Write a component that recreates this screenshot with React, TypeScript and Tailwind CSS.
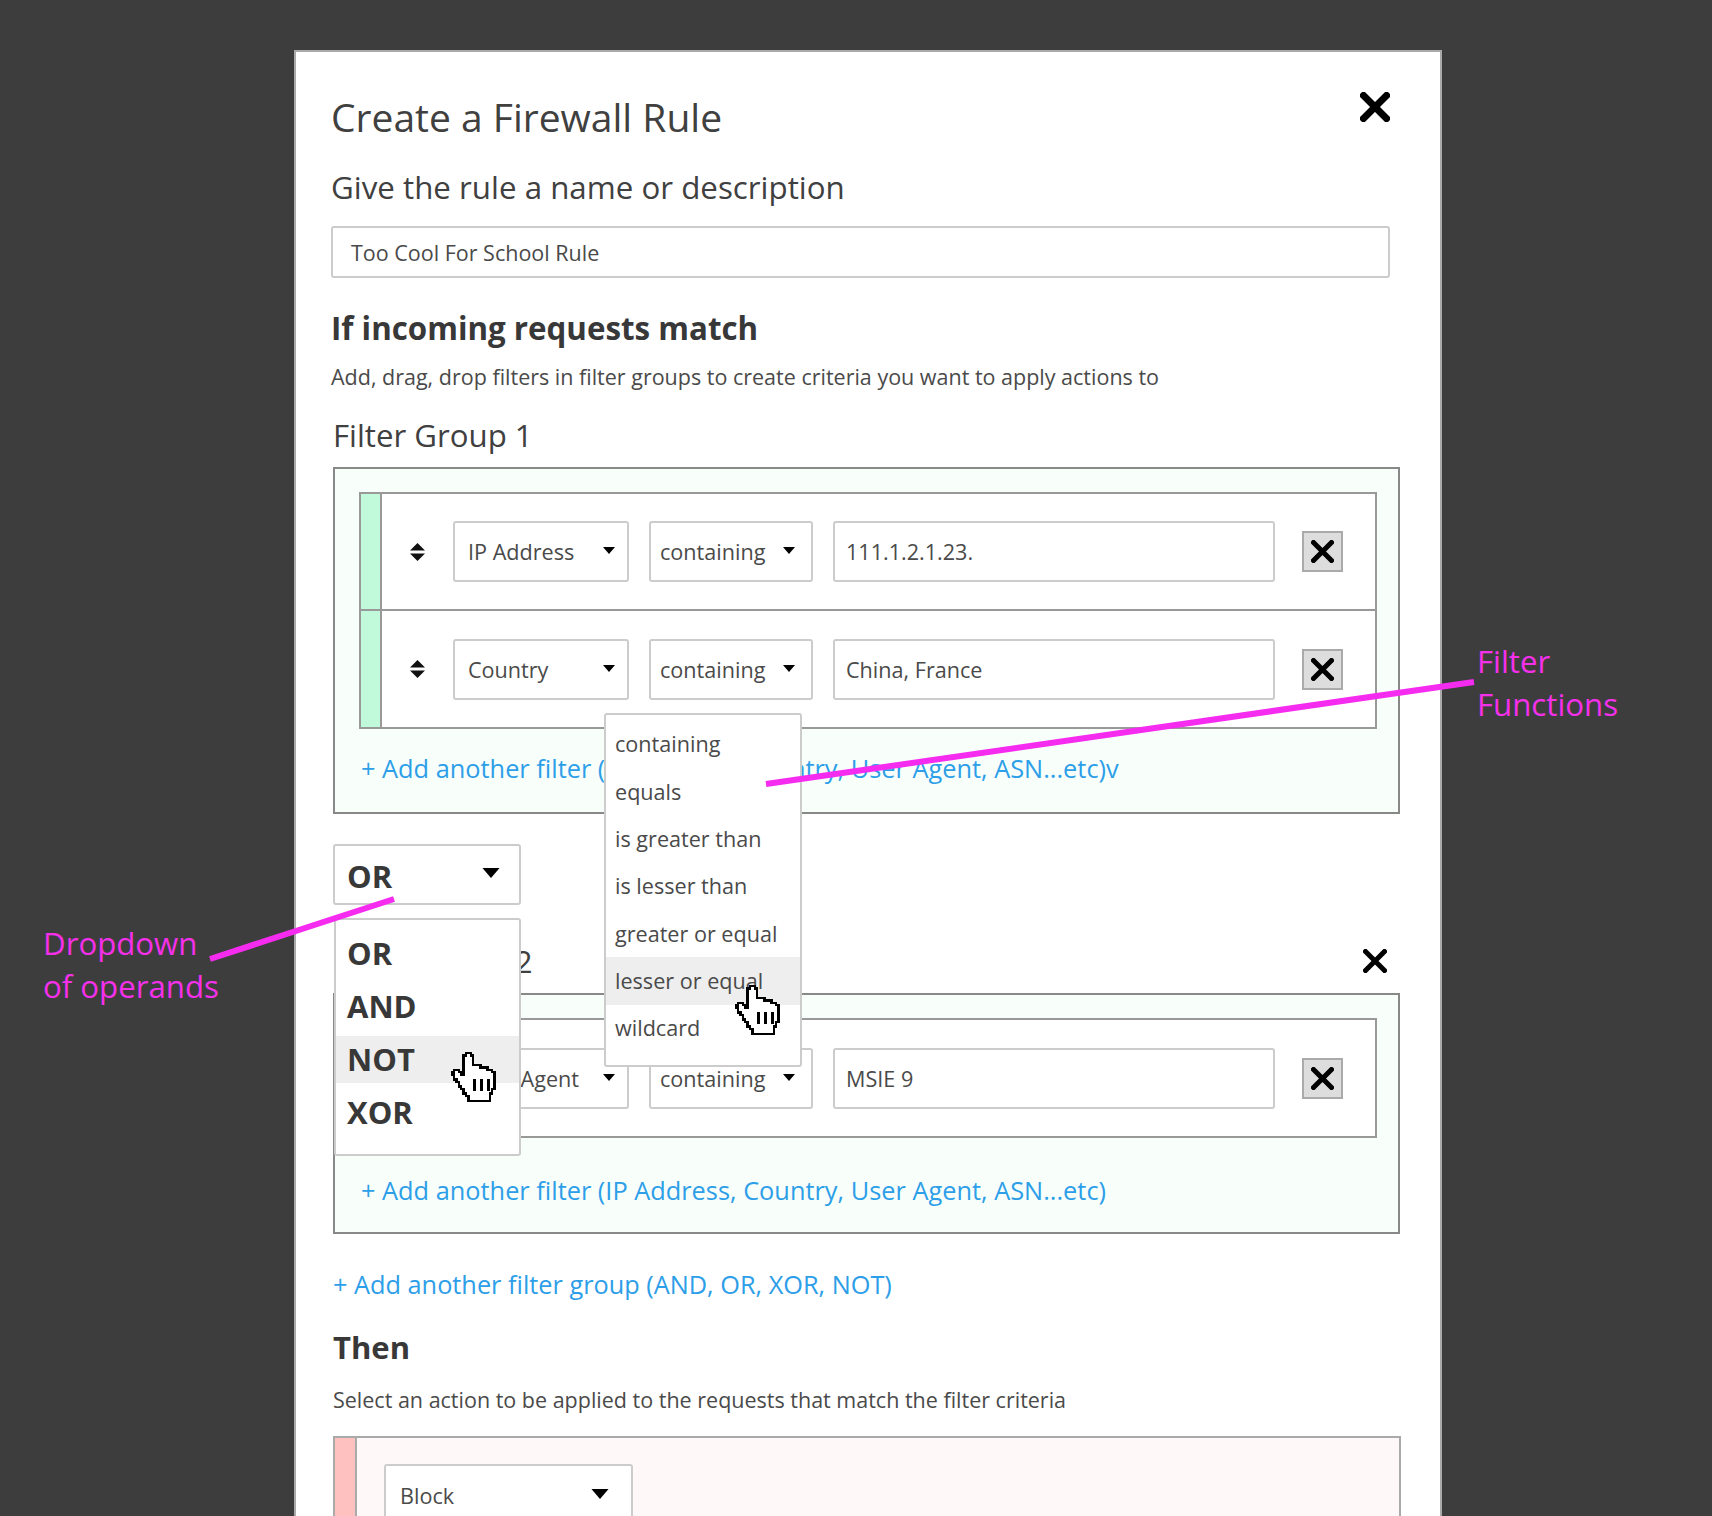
const font = "font-['Open_Sans',sans-serif]";

const Caret = ({ w = 12, h = 7 }: { w?: number; h?: number }) => (
  <svg width={w} height={h} viewBox="0 0 12 7" className="shrink-0">
    <path d="M0 0H12L6 7Z" fill="#000" />
  </svg>
);

const Cross = ({ size, stroke }: { size: number; stroke: number }) => (
  <svg width={size} height={size} viewBox={`0 0 ${size} ${size}`}>
    <path
      d={`M${stroke / 2} ${stroke / 2}L${size - stroke / 2} ${size - stroke / 2}M${size - stroke / 2} ${stroke / 2}L${stroke / 2} ${size - stroke / 2}`}
      stroke="#000"
      strokeWidth={stroke}
      strokeLinecap="square"
    />
  </svg>
);

const SortIcon = () => (
  <svg width="15" height="18" viewBox="0 0 15 18">
    <path d="M7.5 0L15 7.5H0ZM0 10.5H15L7.5 18Z" fill="#111" />
  </svg>
);

const Hand = ({ className }: { className: string }) => (
  <svg
    width="48"
    height="50"
    viewBox="-0.5 -0.5 20 21"
    shapeRendering="crispEdges"
    className={className}
  >
    <path
      d="M6 1h1v-1h2v1h1v4h3v1h3v1h2v1h1v7h-1v2h-1v3h-9v-2h-1v-1h-1v-2h-1v-1h-1v-2h-1v-1h-1v-2h-1v-1h1v-1h2v1h1v1h1z"
      fill="#fff"
      stroke="#000"
      strokeWidth="1"
    />
    <path d="M10 11h1v5h-1zM13 11h1v5h-1zM16 11h1v5h-1z" fill="#000" />
  </svg>
);

const Select = ({
  label,
  className,
  px,
}: {
  label: string;
  className: string;
  px: string;
}) => (
  <div
    className={`flex h-[61px] shrink-0 items-center justify-between rounded-[3px] border-2 border-[#ccc] bg-white text-[21.6px] text-[#4a4a4a] ${px} ${className}`}
  >
    <span className="whitespace-nowrap pt-[2px]">{label}</span>
    <span className="-mt-[2px]">
      <Caret />
    </span>
  </div>
);

const FilterRow = ({
  field,
  value,
  last,
}: {
  field: string;
  value: string;
  last?: boolean;
}) => (
  <div
    className={`flex items-center ${last ? "h-[116px]" : "h-[117px] border-b-2 border-[#999]"}`}
  >
    <div className="h-full w-[21px] shrink-0 border-r-2 border-[#999] bg-[#c0fadb]" />
    <div className="ml-[28px] flex w-[15px] shrink-0 justify-center">
      <SortIcon />
    </div>
    <Select label={field} className="ml-[28px] w-[176px]" px="pl-[13px] pr-[12px]" />
    <Select label="containing" className="ml-[20px] w-[164px]" px="pl-[9px] pr-[16px]" />
    <div className="ml-[20px] flex h-[61px] w-[442px] items-center rounded-[3px] border-2 border-[#ccc] bg-white pl-[11px] pt-[2px] text-[21.6px] text-[#4a4a4a]">
      {value}
    </div>
    <button className="ml-[27px] flex h-[41px] w-[41px] items-center justify-center border-2 border-[#aaa] bg-[#ddd]">
      <Cross size={23} stroke={5} />
    </button>
  </div>
);

const functionsList = [
  "containing",
  "equals",
  "is greater than",
  "is lesser than",
  "greater or equal",
  "lesser or equal",
  "wildcard",
];

const operands = ["OR", "AND", "NOT", "XOR"];

export default function App() {
  return (
    <div className={`relative h-[1516px] w-[1712px] overflow-hidden bg-[#3d3d3d] pt-[50px] ${font}`}>
      {/* modal */}
      <div className="relative ml-[294px] h-[1500px] w-[1148px] border-2 border-[#aaa] bg-white pl-[35px]">
        <div className="absolute right-[50px] top-[40px]">
          <Cross size={30} stroke={7} />
        </div>
        <h1 className="pt-[43px] text-[39px] leading-[44px] text-[#404040]">Create a Firewall Rule</h1>
        <h2 className="mt-[28px] text-[31.3px] leading-[40px] text-[#404040]">
          Give the rule a name or description
        </h2>
        <div className="mt-[19px] flex h-[52px] w-[1059px] items-center rounded-[3px] border-2 border-[#ccc] pl-[18px] pt-[2px] text-[21.5px] text-[#4a4a4a]">
          Too Cool For School Rule
        </div>
        <h3 className="mt-[30px] text-[31.3px] font-bold leading-[40px] text-[#383838]">
          If incoming requests match
        </h3>
        <p className="mt-[14px] text-[21.5px] leading-[30px] text-[#4a4a4a]">
          Add, drag, drop filters in filter groups to create criteria you want to apply actions to
        </p>
        <div className="ml-[2px] mt-[23px] text-[31.2px] leading-[40px] text-[#404040]">Filter Group 1</div>

        {/* group 1 */}
        <div className="ml-[2px] mt-[12px] h-[347px] w-[1067px] border-2 border-[#888] bg-[#f8fffb] pl-[24px] pr-[21px] pt-[23px]">
          <div className="border-2 border-[#999] bg-white">
            <FilterRow field="IP Address" value="111.1.2.1.23." />
            <FilterRow field="Country" value="China, France" last />
          </div>
          <div className="ml-[2px] mt-[24px] text-[25.35px] leading-[30px] text-[#2d9ee8]">
            + Add another filter (IP Address, Country, User Agent, ASN...etc)v
          </div>
        </div>

        {/* operand select */}
        <div className="ml-[2px] mt-[30px] flex h-[61px] w-[188px] items-center justify-between rounded-[3px] border-2 border-[#ccc] bg-white pl-[12px] pr-[19px] text-[31px] font-bold text-[#383838]">
          <span className="pt-[3px]">OR</span>
          <span className="-mt-[3px]">
            <Caret w={18} h={10} />
          </span>
        </div>

        <div className="ml-[2px] mt-[36px] text-[31.2px] leading-[40px] text-[#404040]">Filter Group 2</div>
        <div className="absolute right-[53px] top-[897px]">
          <Cross size={24} stroke={5} />
        </div>

        {/* group 2 */}
        <div className="ml-[2px] mt-[12px] h-[241px] w-[1067px] border-2 border-[#888] bg-[#f8fffb] pl-[24px] pr-[21px] pt-[23px]">
          <div className="border-2 border-[#999] bg-white">
            <FilterRow field="User Agent" value="MSIE 9" last />
          </div>
          <div className="ml-[2px] mt-[37px] text-[25.35px] leading-[30px] text-[#2d9ee8]">
            + Add another filter (IP Address, Country, User Agent, ASN...etc)
          </div>
        </div>

        <div className="ml-[2px] mt-[35px] text-[25.3px] leading-[30px] text-[#2d9ee8]">
          + Add another filter group (AND, OR, XOR, NOT)
        </div>
        <h3 className="ml-[2px] mt-[30px] text-[31px] font-bold leading-[36px] text-[#383838]">Then</h3>
        <p className="ml-[2px] mt-[20px] text-[21.5px] leading-[30px] text-[#4a4a4a]">
          Select an action to be applied to the requests that match the filter criteria
        </p>

        {/* action box */}
        <div className="ml-[2px] mt-[21px] flex h-[200px] w-[1068px] border-2 border-[#aaa] bg-[#fff8f8]">
          <div className="h-full w-[22px] shrink-0 border-r-2 border-[#aaa] bg-[#ffc0c0]" />
          <div className="ml-[27px] mt-[26px] flex h-[64px] w-[249px] items-center justify-between rounded-[3px] border-2 border-[#ccc] bg-white pl-[14px] pr-[22px] text-[21.6px] text-[#4a4a4a]">
            <span>Block</span>
            <span className="-mt-[4px]">
              <Caret w={18} h={10} />
            </span>
          </div>
        </div>

        {/* functions dropdown */}
        <div className="absolute left-[308px] top-[661px] h-[354px] w-[198px] rounded-[3px] border-2 border-[#ccc] bg-white pt-[6px]">
          {functionsList.map((item) => (
            <div
              key={item}
              className={`flex h-[47.3px] items-center pl-[9px] text-[21.6px] text-[#4a4a4a] ${item === "lesser or equal" ? "bg-[#eee]" : ""}`}
            >
              {item}
            </div>
          ))}
        </div>

        {/* operands dropdown */}
        <div className="absolute left-[38px] top-[866px] h-[238px] w-[187px] rounded-[3px] border-2 border-[#ccc] bg-white pt-[10px]">
          {operands.map((item) => (
            <div
              key={item}
              className={`mb-[6px] flex h-[47px] items-center pl-[11px] text-[31px] font-bold text-[#383838] ${item === "NOT" ? "bg-[#eee]" : ""}`}
            >
              {item}
            </div>
          ))}
        </div>

        <Hand className="absolute left-[152px] top-[1000px]" />
        <Hand className="absolute left-[436px] top-[933px]" />
      </div>

      {/* annotations */}
      <svg className="pointer-events-none absolute left-0 top-0" width="1712" height="1516">
        <path d="M766 784L1474 682" stroke="#f62bf0" strokeWidth="6" />
        <path d="M210 959L394 899" stroke="#f62bf0" strokeWidth="6" />
      </svg>
      <div className="absolute left-[1477px] top-[640px] text-[31.2px] leading-[43px] text-[#f530ea]">
        Filter
        <br />
        Functions
      </div>
      <div className="absolute left-[43px] top-[922px] text-[31.2px] leading-[43px] text-[#f530ea]">
        Dropdown
        <br />
        of operands
      </div>
    </div>
  );
}
